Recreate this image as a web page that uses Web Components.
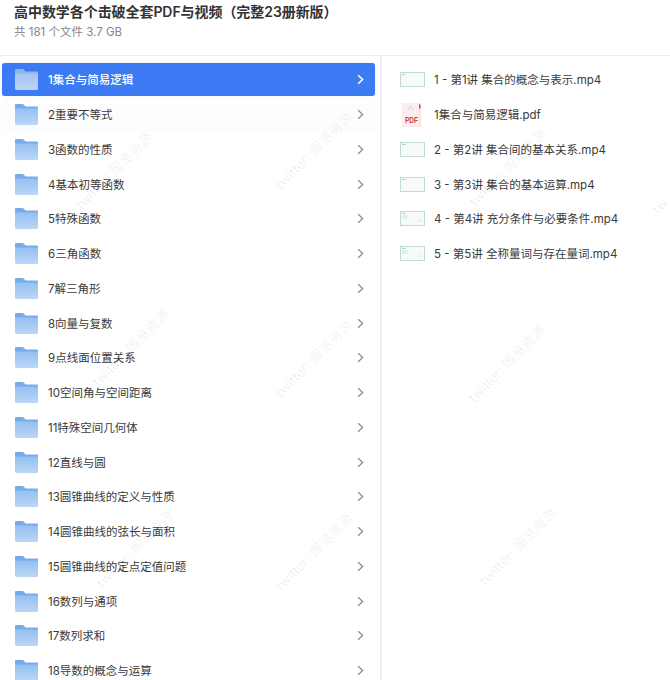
<!DOCTYPE html>
<html lang="zh-CN">
<head>
<meta charset="utf-8">
<title>高中数学</title>
<style>
html,body{margin:0;padding:0;background:#fff;width:670px;height:680px;overflow:hidden}
body{font-family:Inter,"Noto Sans CJK SC",sans-serif;color:#333}
</style>
</head>
<body>
<share-page>
  <share-header slot="header" title-text="高中数学各个击破全套PDF与视频（完整23册新版）" sub="共 181 个文件 3.7 GB"></share-header>
  <folder-list slot="left">
    <folder-row selected>1集合与简易逻辑</folder-row>
    <folder-row hovered>2重要不等式</folder-row>
    <folder-row>3函数的性质</folder-row>
    <folder-row>4基本初等函数</folder-row>
    <folder-row>5特殊函数</folder-row>
    <folder-row>6三角函数</folder-row>
    <folder-row>7解三角形</folder-row>
    <folder-row>8向量与复数</folder-row>
    <folder-row>9点线面位置关系</folder-row>
    <folder-row>10空间角与空间距离</folder-row>
    <folder-row>11特殊空间几何体</folder-row>
    <folder-row>12直线与圆</folder-row>
    <folder-row>13圆锥曲线的定义与性质</folder-row>
    <folder-row>14圆锥曲线的弦长与面积</folder-row>
    <folder-row>15圆锥曲线的定点定值问题</folder-row>
    <folder-row>16数列与通项</folder-row>
    <folder-row>17数列求和</folder-row>
    <folder-row>18导数的概念与运算</folder-row>
  </folder-list>
  <file-list slot="right">
    <file-row kind="video">1 - 第1讲 集合的概念与表示.mp4</file-row>
    <file-row kind="pdf">1集合与简易逻辑.pdf</file-row>
    <file-row kind="video">2 - 第2讲 集合间的基本关系.mp4</file-row>
    <file-row kind="video">3 - 第3讲 集合的基本运算.mp4</file-row>
    <file-row kind="video" detail>4 - 第4讲 充分条件与必要条件.mp4</file-row>
    <file-row kind="video" detail>5 - 第5讲 全称量词与存在量词.mp4</file-row>
  </file-list>
  <water-marks slot="overlay"></water-marks>
</share-page>

<script>
function shadow(el, html){ el.attachShadow({mode:'open'}).innerHTML = html; }

customElements.define('share-page', class extends HTMLElement{
  constructor(){super();shadow(this,`<style>
    :host{display:block;position:relative;width:670px;height:680px;overflow:hidden;background:#fff}
    .panes{display:grid;grid-template-columns:380px 2px 1fr;height:624px;overflow:hidden}
    .rule{background:#f0f0f2}
  </style>
  <slot name="header"></slot>
  <div class="panes"><slot name="left"></slot><div class="rule"></div><slot name="right"></slot></div>
  <slot name="overlay"></slot>`);}
});

customElements.define('share-header', class extends HTMLElement{
  connectedCallback(){
    shadow(this,`<style>
      :host{display:flex;flex-direction:column;box-sizing:border-box;height:56px;padding:2px 14px 0;border-bottom:1px solid #ececf0}
      .t{font-size:14px;line-height:20px;font-weight:600;color:#333;white-space:nowrap;letter-spacing:-.06px}
      .s{font-size:11.5px;line-height:16px;margin-top:2px;color:#858585;white-space:nowrap}
    </style><div class="t">${this.getAttribute('title-text')}</div><div class="s">${this.getAttribute('sub')}</div>`);
  }
});

customElements.define('folder-list', class extends HTMLElement{
  constructor(){super();shadow(this,`<style>
    :host{display:flex;flex-direction:column;padding:6.5px 5px 0 2px;min-width:0;overflow:hidden}
  </style><slot></slot>`);}
});

customElements.define('file-list', class extends HTMLElement{
  constructor(){super();shadow(this,`<style>
    :host{display:flex;flex-direction:column;padding:6.5px 0 0 18px;min-width:0;overflow:hidden}
  </style><slot></slot>`);}
});

customElements.define('folder-icon', class extends HTMLElement{
  connectedCallback(){
    const sel=this.hasAttribute('selected');
    const id='g'+Math.random().toString(36).slice(2);
    const tab=sel?'#8fb4ee':'#78abeb', a=sel?'#a4c4f1':'#94c0f1', b=sel?'#bdd4f3':'#bcd6f5';
    shadow(this,`<style>:host{display:block;width:23px;height:21px;flex:none}svg{display:block}</style>
    <svg width="23" height="21" viewBox="0 0 23 21">
      <defs><linearGradient id="${id}" x1="0" y1="0" x2="0" y2="1"><stop offset="0" stop-color="${a}"/><stop offset="1" stop-color="${b}"/></linearGradient></defs>
      <path d="M0 1.2C0 .5.5 0 1.2 0h6.3c.6 0 1 .2 1.4.7L10.4 2.6h11.4c.7 0 1.2.5 1.2 1.2V8H0z" fill="${tab}"/>
      <path d="M0 4.6h23v15.2c0 .7-.5 1.2-1.2 1.2H1.2C.5 21 0 20.5 0 19.8z" fill="url(#${id})"/>
    </svg>`);
  }
});

customElements.define('folder-row', class extends HTMLElement{
  connectedCallback(){
    const sel=this.hasAttribute('selected');
    shadow(this,`<style>
      :host{display:flex;align-items:center;flex:none;box-sizing:border-box;height:34.75px;padding:0 11px 0 13px;gap:10px;font-size:11.5px;color:#3a3a3a;border-radius:3px}
      :host([hovered]){background:#fdfdfd}
      :host([selected]){background:#3d7bf4;color:#fff;font-weight:500;height:33px;margin:.5px 0 1.25px;box-shadow:0 0 1px rgba(61,123,244,.5)}
      .l{flex:1;white-space:nowrap;margin-top:-1px}
      svg{display:block;flex:none}
    </style>
    <folder-icon ${sel?'selected':''}></folder-icon>
    <span class="l"><slot></slot></span>
    <svg width="7" height="11" viewBox="0 0 7 11"><path d="M1.2 1.2 5.6 5.5 1.2 9.8" fill="none" stroke="${sel?'#fff':'#8c8c8c'}" stroke-width="${sel?1.6:1.3}"/></svg>`);
  }
});

customElements.define('video-thumb', class extends HTMLElement{
  connectedCallback(){
    const d=this.hasAttribute('detail');
    shadow(this,`<style>:host{display:block;width:25px;height:15px;flex:none}svg{display:block}</style>
    <svg width="25" height="15" viewBox="0 0 25 15">
      <rect x=".5" y=".5" width="24" height="14" fill="#f6fbfa" stroke="#c0dada"/>
      <path d="M2 2.5h3.5" stroke="#a9c0c0" stroke-width=".8"/>
      ${d?'<path d="M2 5h7M2 7h5" stroke="#ccdad8" stroke-width=".8"/><path d="M18 10h4" stroke="#d6e3e1" stroke-width=".8"/>':''}
    </svg>`);
  }
});

customElements.define('pdf-icon', class extends HTMLElement{
  connectedCallback(){
    shadow(this,`<style>:host{display:block;width:25px;height:24px;flex:none}svg{display:block}</style>
    <svg width="25" height="24" viewBox="0 0 25 24">
      <path d="M2 0h19v24H2z" fill="#fbeeee"/>
      <path d="M19 0h2v24H2v-1h17z" fill="#f6e4e4"/>
      <path d="M19 1.5h1.5v4H19z" fill="#d8403f"/>
      <path d="M8 7.5 10.5 3.5 13 7.5M10.5 3.5V2.5" fill="none" stroke="#edc9c8" stroke-width="1"/>
      <text x="5" y="20" textLength="13" lengthAdjust="spacingAndGlyphs" font-family="Liberation Sans" font-weight="700" font-size="9" fill="#d2443f">PDF</text>
    </svg>`);
  }
});

customElements.define('file-row', class extends HTMLElement{
  connectedCallback(){
    const k=this.getAttribute('kind');
    const icon=k==='pdf'?'<pdf-icon></pdf-icon>':`<video-thumb ${this.hasAttribute('detail')?'detail':''}></video-thumb>`;
    shadow(this,`<style>
      :host{display:flex;align-items:center;flex:none;height:34.75px;gap:9px;font-size:11.5px;color:#3a3a3a;white-space:nowrap}
      span{margin-top:-1px}
    </style>${icon}<span><slot></slot></span>`);
  }
});

customElements.define('water-marks', class extends HTMLElement{
  connectedCallback(){
    const full='twitter: 阁览资源';
    const pts=[[113,170,full],[313,150,full],[507,167,full],[660,206,'tw'],[130,347,full],[313,358,full],[506,363,full],[134,548,full],[313,551,full],[517,546,full]];
    shadow(this,`<style>
      :host{position:absolute;inset:0;pointer-events:none;display:block}
      span{position:absolute;transform:translate(-50%,-50%) rotate(-45deg);font-size:13.5px;color:rgba(0,0,0,.075);white-space:nowrap}
    </style>`+pts.map(p=>`<span style="left:${p[0]}px;top:${p[1]}px">${p[2]}</span>`).join(''));
  }
});
</script>
</body>
</html>
